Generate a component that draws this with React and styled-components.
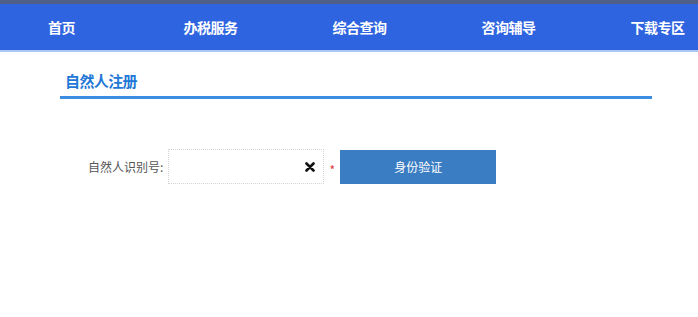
import styled, { createGlobalStyle } from "styled-components";

const GlobalStyle = createGlobalStyle`
  html, body {
    margin: 0;
    padding: 0;
    background: #ffffff;
    font-family: "Noto Sans CJK SC", "Liberation Sans", sans-serif;
  }
`;

const Page = styled.div`
  width: 698px;
  height: 317px;
  overflow: hidden;
  background: #ffffff;
`;

const TopBar = styled.div`
  height: 46px;
  border-top: 4px solid #4f5f86;
  border-bottom: 2px solid #a9c8f6;
  background: #2f64e0;
  display: flex;
  align-items: center;
`;

const NavList = styled.ul`
  list-style: none;
  margin: 0 0 0 -13px;
  padding: 0;
  display: flex;
`;

const NavItem = styled.li`
  flex: 0 0 149px;
  text-align: center;
  color: #ffffff;
  font-size: 14px;
  font-weight: bold;
  letter-spacing: -0.5px;
`;

const Content = styled.div`
  margin: 0 46px 0 60px;
  padding-top: 19px;
`;

const TitleBar = styled.div`
  border-bottom: 3px solid #3b8de2;
  padding: 0 0 5px 5px;
`;

const Title = styled.h2`
  margin: 0;
  font-size: 15px;
  font-weight: bold;
  color: #1f78d6;
  line-height: 20px;
  letter-spacing: -0.6px;
`;

const FormRow = styled.div`
  display: flex;
  align-items: center;
  margin-top: 50px;
  padding-left: 28px;
`;

const Label = styled.label`
  font-size: 12px;
  color: #555555;
  margin-right: 5px;
`;

const InputBox = styled.div`
  width: 156px;
  height: 35px;
  border: 1px dotted #d2d2d2;
  display: flex;
  align-items: center;
  justify-content: flex-end;
  padding-right: 8px;
  box-sizing: border-box;
`;

const Input = styled.input`
  flex: 1;
  min-width: 0;
  border: none;
  outline: none;
  background: transparent;
  height: 100%;
`;

const Clear = styled.svg`
  width: 10px;
  height: 10px;
  flex: none;
`;

const Required = styled.span`
  color: #e0343a;
  font-size: 12px;
  width: 16px;
  text-align: center;
  line-height: 1;
  padding-top: 7px;
`;

const Button = styled.button`
  width: 156px;
  height: 34px;
  border: none;
  background: #3a7dc3;
  color: #ffffff;
  font-family: inherit;
  font-size: 12px;
  cursor: pointer;
`;

const navs = ["首页", "办税服务", "综合查询", "咨询辅导", "下载专区"];

const App = () => {
  return (
    <Page>
      <GlobalStyle />
      <TopBar>
        <NavList>
          {navs.map((n) => (
            <NavItem key={n}>{n}</NavItem>
          ))}
        </NavList>
      </TopBar>
      <Content>
        <TitleBar>
          <Title>自然人注册</Title>
        </TitleBar>
        <FormRow>
          <Label>自然人识别号:</Label>
          <InputBox>
            <Input />
            <Clear viewBox="0 0 10 10">
              <path d="M1.5 1.5 L8.5 8.5 M8.5 1.5 L1.5 8.5" stroke="#111" strokeWidth="2.6" strokeLinecap="round" />
            </Clear>
          </InputBox>
          <Required>*</Required>
          <Button>身份验证</Button>
        </FormRow>
      </Content>
    </Page>
  );
};

export default App;
